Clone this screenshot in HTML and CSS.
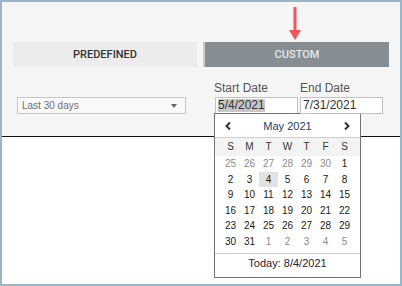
FILE: index.html
```html
<!DOCTYPE html>
<html>
<head>
<meta charset="utf-8">
<link rel="stylesheet" href="styles.css">
</head>
<body>
<div class="frame">
  <div class="top">
    <svg class="pointer" width="12" height="34" viewBox="0 0 12 34">
      <rect x="4.5" y="0" width="3" height="25" fill="#f0575c"/>
      <polygon points="0,23 12,23 6,33" fill="#f0575c"/>
    </svg>
    <div class="tabs">
      <div class="tab tab-pre">PREDEFINED</div>
      <div class="tab tab-custom">CUSTOM</div>
    </div>
    <div class="filters">
      <div class="dropdown">
        <span class="dd-text">Last 30 days</span>
        <span class="dd-caret"></span>
      </div>
      <div class="group group-start">
        <div class="label">Start Date</div>
        <div class="input"><span class="sel">5/4/2021</span></div>
        <div class="popup">
          <div class="cal-head">
            <svg class="chev" width="8" height="10" viewBox="0 0 8 10"><polyline points="6,1.5 2.5,5 6,8.5" fill="none" stroke="#333" stroke-width="2"/></svg>
            <span class="month">May 2021</span>
            <svg class="chev" width="8" height="10" viewBox="0 0 8 10"><polyline points="2,1.5 5.5,5 2,8.5" fill="none" stroke="#333" stroke-width="2"/></svg>
          </div>
          <div class="weekdays">
            <span>S</span><span>M</span><span>T</span><span>W</span><span>T</span><span>F</span><span>S</span>
          </div>
          <div class="days">
            <span class="other">25</span><span class="other">26</span><span class="other">27</span><span class="other">28</span><span class="other">29</span><span class="other">30</span><span>1</span>
            <span>2</span><span>3</span><span class="current">4</span><span>5</span><span>6</span><span>7</span><span>8</span>
            <span>9</span><span>10</span><span>11</span><span>12</span><span>13</span><span>14</span><span>15</span>
            <span>16</span><span>17</span><span>18</span><span>19</span><span>20</span><span>21</span><span>22</span>
            <span>23</span><span>24</span><span>25</span><span>26</span><span>27</span><span>28</span><span>29</span>
            <span>30</span><span>31</span><span class="other">1</span><span class="other">2</span><span class="other">3</span><span class="other">4</span><span class="other">5</span>
          </div>
          <div class="today">Today: 8/4/2021</div>
        </div>
      </div>
      <div class="group group-end">
        <div class="label">End Date</div>
        <div class="input">7/31/2021</div>
      </div>
    </div>
  </div>
  <div class="bottom"></div>
</div>
</body>
</html>
```

FILE: styles.css
```css
html, body {
  margin: 0;
  padding: 0;
  background: #ffffff;
}
body {
  font-family: "Liberation Sans", Arial, sans-serif;
  color: #333;
}
.frame {
  box-sizing: border-box;
  width: 402px;
  height: 286px;
  border: 2px solid #9ab6c6;
  background: #ffffff;
  display: flex;
  flex-direction: column;
}
.top {
  position: relative;
  height: 134px;
  background: #f5f5f5;
  border-bottom: 1px solid #111;
}
.pointer {
  position: absolute;
  left: 287px;
  top: 5px;
}
.tabs {
  display: flex;
  margin: 40px 0 0 11px;
  gap: 6px;
  height: 25px;
}
.tab {
  display: flex;
  align-items: center;
  justify-content: center;
  font-family: Roboto, "Liberation Sans", sans-serif;
  font-size: 11px;
  font-weight: 500;
}
.tab-pre {
  width: 184px;
  background: #ececec;
  color: #333;
}
.tab-custom {
  box-sizing: border-box;
  width: 186px;
  background: #878e93;
  color: #e6e8e9;
  border-left: 2px solid #c9cdd0;
}
.filters {
  display: flex;
  align-items: flex-end;
  margin: 14px 0 0 15px;
}
.dropdown {
  box-sizing: border-box;
  width: 169px;
  height: 17px;
  border: 1px solid #c6c6c6;
  background: #f9f9f9;
  display: flex;
  align-items: center;
  justify-content: space-between;
  padding: 0 8px 0 4px;
}
.dd-text {
  font-size: 10px;
  color: #6f6f6f;
}
.dd-caret {
  width: 0;
  height: 0;
  border-left: 3px solid transparent;
  border-right: 3px solid transparent;
  border-top: 4px solid #666;
}
.group {
  position: relative;
}
.group-start {
  margin-left: 28px;
  width: 84px;
}
.group-end {
  margin-left: 2px;
  width: 84px;
}
.label {
  font-size: 12px;
  line-height: 14px;
  color: #555;
  margin-bottom: 2px;
}
.input {
  box-sizing: border-box;
  width: 83px;
  height: 17px;
  border: 1px solid #c2c2c2;
  background: #fff;
  font-size: 12px;
  line-height: 15px;
  padding-left: 2px;
  color: #333;
}
.group-start .input {
  margin-left: 1px;
}
.sel {
  background: #c7c7c7;
  display: inline-block;
  line-height: 13px;
}
.popup {
  position: absolute;
  left: 0;
  top: 32px;
  box-sizing: border-box;
  width: 147px;
  border: 1px solid #737373;
  background: #fff;
}
.cal-head {
  height: 23px;
  border-bottom: 1px solid #cfcfcf;
  display: flex;
  align-items: center;
  justify-content: space-between;
  padding: 0 9px 0 9px;
}
.month {
  font-size: 11px;
  color: #1e3e6e;
}
.weekdays {
  height: 18px;
  background: #f3f3f3;
  display: grid;
  grid-template-columns: repeat(7, 19px);
  justify-content: center;
  font-size: 10px;
  line-height: 18px;
  color: #333;
  text-align: center;
}
.days {
  display: grid;
  grid-template-columns: repeat(7, 19px);
  grid-auto-rows: 15.6px;
  justify-content: center;
  font-size: 10px;
  line-height: 15.6px;
  text-align: center;
  color: #1a1a1a;
  padding-bottom: 3px;
}
.days .other {
  color: #8a8a8a;
}
.days .current {
  background: #e2e2e2;
}
.today {
  border-top: 1px solid #cfcfcf;
  height: 23px;
  line-height: 19px;
  font-size: 11px;
  text-align: center;
  color: #2a2233;
}
.bottom {
  flex: 1;
  background: #fff;
}
```
